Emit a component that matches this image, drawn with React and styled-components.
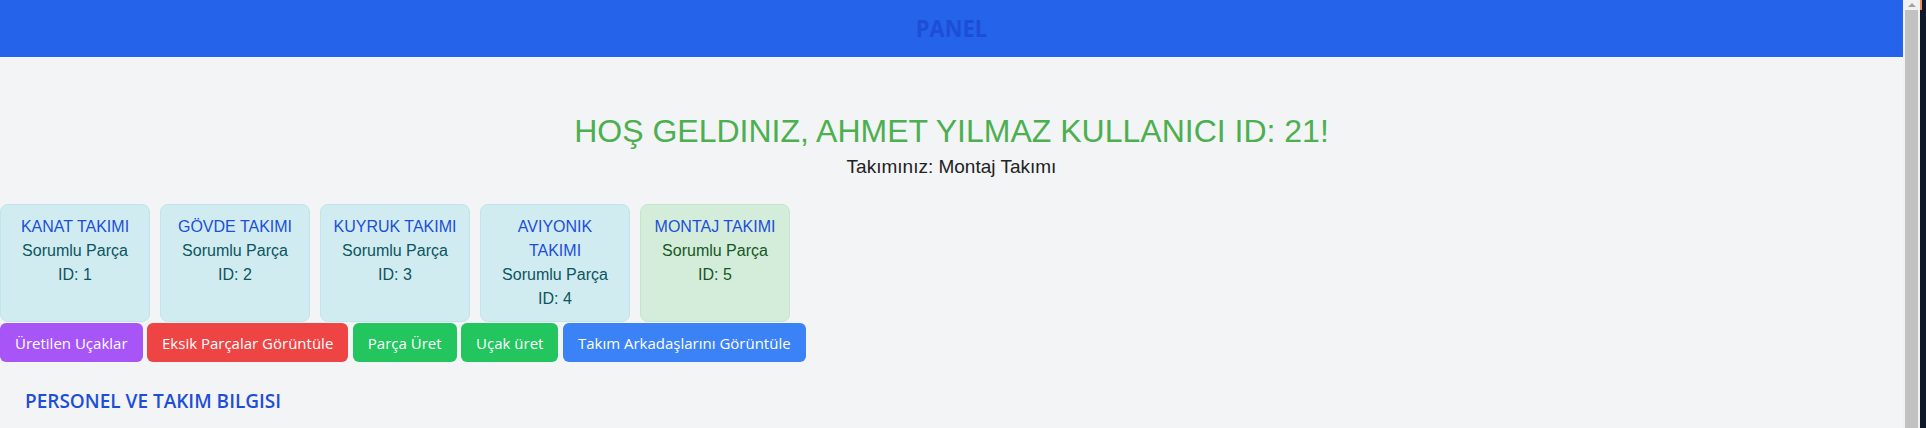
import React from "react";
import styled, { createGlobalStyle } from "styled-components";

const GlobalStyle = createGlobalStyle`
	html, body {
		margin: 0;
		padding: 0;
		background: #f3f4f6;
		overflow: hidden;
	}
	* {
		box-sizing: border-box;
	}
`;

const teams = [
	{ id: 1, name: "KANAT TAKIMI" },
	{ id: 2, name: "GÖVDE TAKIMI" },
	{ id: 3, name: "KUYRUK TAKIMI" },
	{ id: 4, name: "AVIYONIK TAKIMI" },
	{ id: 5, name: "MONTAJ TAKIMI", mine: true },
];

const actions = [
	{ label: "Üretilen Uçaklar", color: "#a855f7" },
	{ label: "Eksik Parçalar Görüntüle", color: "#ef4444" },
	{ label: "Parça Üret", color: "#22c55e" },
	{ label: "Uçak üret", color: "#22c55e" },
	{ label: "Takım Arkadaşlarını Görüntüle", color: "#3b82f6" },
];

export default function App() {
	return (
		<>
			<GlobalStyle />
			<Frame>
				<Page>
					<Header>
						<HeaderTitle>PANEL</HeaderTitle>
					</Header>
					<Welcome>
						<WelcomeTitle>HOŞ GELDINIZ, AHMET YILMAZ KULLANICI ID: 21!</WelcomeTitle>
						<TeamLine>Takımınız: Montaj Takımı</TeamLine>
					</Welcome>
					<TeamList>
						{teams.map((team) => (
							<TeamCard key={team.id} $mine={team.mine}>
								<TeamName>{team.name}</TeamName>
								<div>Sorumlu Parça</div>
								<div>ID: {team.id}</div>
							</TeamCard>
						))}
					</TeamList>
					<ActionBar>
						{actions.map((action) => (
							<ActionButton key={action.label} type="button" $bg={action.color}>
								{action.label}
							</ActionButton>
						))}
					</ActionBar>
					<SectionTitle>PERSONEL VE TAKIM BILGISI</SectionTitle>
				</Page>
				<Scrollbar>
					<ScrollArrow />
					<ScrollThumb />
				</Scrollbar>
				<EdgeStrip>
					<EdgeMark />
				</EdgeStrip>
			</Frame>
		</>
	);
}

const Frame = styled.div`
	display: flex;
	height: 428px;
	overflow: hidden;
`;

const Page = styled.main`
	flex: 1;
	min-width: 0;
`;

const Header = styled.header`
	height: 57px;
	background: #2563eb;
	display: flex;
	align-items: center;
	justify-content: center;
`;

const HeaderTitle = styled.h1`
	margin: 0;
	font-family: "Open Sans", "Noto Sans", sans-serif;
	font-size: 23px;
	font-weight: 700;
	color: #1d4ed8;
	line-height: 1;
	transform: scaleX(0.95);
`;

const Welcome = styled.section`
	text-align: center;
	padding-top: 56px;
	font-family: "Liberation Sans", Arial, sans-serif;
`;

const WelcomeTitle = styled.h2`
	margin: 0;
	font-size: 32px;
	font-weight: 400;
	line-height: 37px;
	color: #4caf50;
`;

const TeamLine = styled.p`
	margin: 6px 0 0;
	font-size: 19px;
	line-height: 22px;
	color: #222222;
`;

const TeamList = styled.div`
	display: flex;
	gap: 10px;
	margin-top: 26px;
	align-items: stretch;
`;

const TeamCard = styled.div`
	width: 150px;
	padding: 10px;
	border: 1px solid ${(p) => (p.$mine ? "#c3e6cb" : "#bee5eb")};
	border-radius: 8px;
	background: ${(p) => (p.$mine ? "#d4edda" : "#d1ecf1")};
	color: ${(p) => (p.$mine ? "#155724" : "#0c5460")};
	text-align: center;
	font-family: "Liberation Sans", Arial, sans-serif;
	font-size: 16px;
	line-height: 24px;
`;

const TeamName = styled.div`
	color: #1d4ed8;
`;

const ActionBar = styled.div`
	display: flex;
	gap: 4.5px;
	margin-top: 1px;
`;

const ActionButton = styled.button`
	height: 39px;
	padding: 0 15px;
	border: none;
	border-radius: 6px;
	background: ${(p) => p.$bg};
	color: #ffffff;
	font-family: "Open Sans", "Noto Sans", sans-serif;
	font-size: 15px;
	cursor: pointer;
`;

const SectionTitle = styled.h3`
	margin: 26px 0 0;
	padding-left: 25px;
	font-family: "Open Sans", "Noto Sans", sans-serif;
	font-size: 19px;
	font-weight: 600;
	color: #1d4ed8;
`;

const Scrollbar = styled.div`
	width: 17px;
	background: #f1f1f1;
	display: flex;
	flex-direction: column;
	align-items: center;
`;

const ScrollArrow = styled.div`
	width: 0;
	height: 0;
	margin: 3px 0 3px;
	border-left: 4px solid transparent;
	border-right: 4px solid transparent;
	border-bottom: 4px solid #a3a3a3;
`;

const ScrollThumb = styled.div`
	width: 13px;
	flex: 1;
	background: #c1c1c1;
`;

const EdgeStrip = styled.div`
	width: 6px;
	background: #0f172a;
`;

const EdgeMark = styled.div`
	width: 2px;
	height: 10px;
	background: #f08a5d;
`;
